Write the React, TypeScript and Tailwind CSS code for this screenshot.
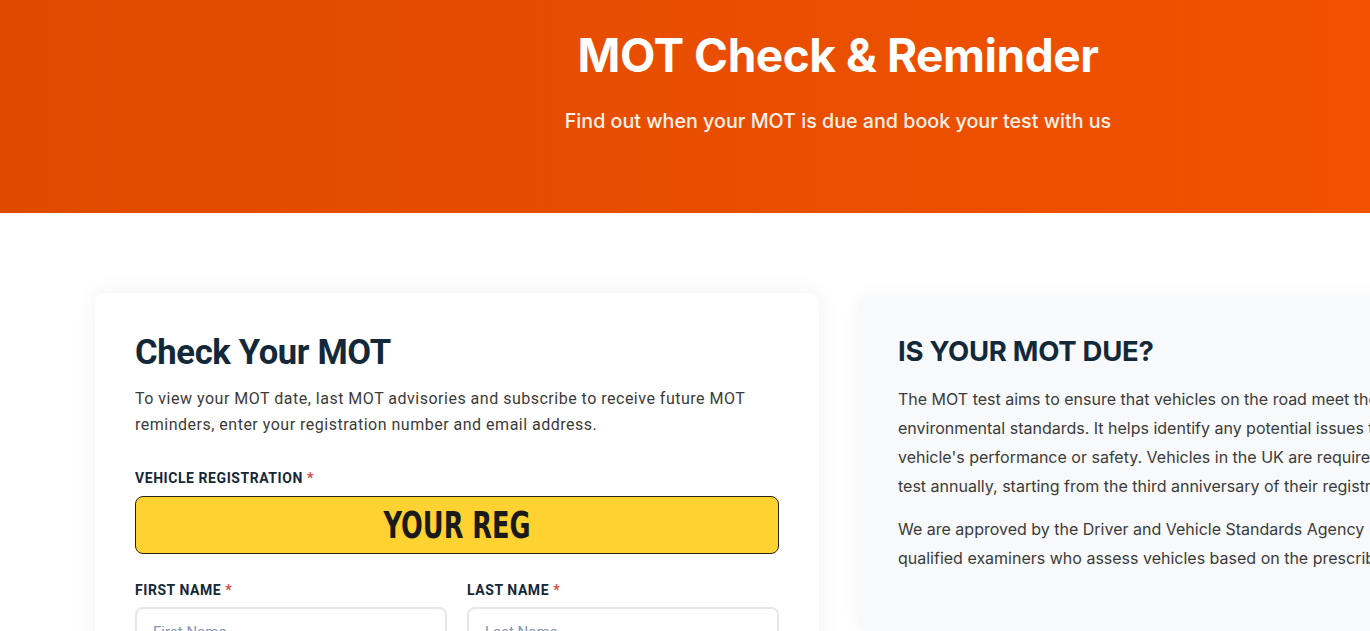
import React from 'react';

const heading = { fontFamily: 'Inter, "Noto Sans", sans-serif' };
const condensed = { fontFamily: 'Roboto, "Liberation Sans", sans-serif' };

const Label: React.FC<{ text: string; className?: string }> = ({ text, className = 'mb-[8px]' }) => (
    <label className={`block text-[14px] leading-[20px] font-bold uppercase tracking-[0.04em] text-[#13293a] ${className}`} style={condensed}>
        {text} <span className="text-[#e0453a]">*</span>
    </label>
);

const App: React.FC = () => {
    return (
        <div className="w-[1676px] bg-white" style={heading}>
            {/* Hero */}
            <section className="h-[213px] bg-linear-to-r from-[#e04a00] to-[#f55300] flex flex-col items-center pt-[25px]">
                <h1 className="text-[46px] leading-[60px] font-bold text-white tracking-[-0.01em]">MOT Check &amp; Reminder</h1>
                <p className="mt-[22px] text-[19.7px] font-medium text-[#fdf1e8]">Find out when your MOT is due and book your test with us</p>
            </section>

            <main className="px-[95px] pt-[80px] grid grid-cols-2 gap-[38px] items-start">
                {/* Left: form card */}
                <div className="bg-white rounded-[10px] shadow-[0_0_24px_rgba(0,0,0,0.06)] px-10 pt-[37px] pb-10" style={condensed}>
                    <h2 className="text-[34.6px] leading-[44px] font-bold text-[#13293a] tracking-[-0.01em]">Check Your MOT</h2>
                    <p className="mt-[12px] text-[16px] leading-[26px] tracking-[0.5px] text-[#3b3b3b]">
                        To view your MOT date, last MOT advisories and subscribe to receive future MOT reminders, enter your registration number and email address.
                    </p>

                    <div className="mt-[30px]">
                        <Label text="Vehicle Registration" />
                        <div className="w-full h-[58px] bg-[#fed230] border border-[#2a2410] rounded-[8px] flex items-center justify-center">
                            <span
                                className="text-[38px] font-bold uppercase text-[#1a1a1a] scale-x-[0.75] inline-block"
                                style={{ fontFamily: '"DejaVu Sans Condensed", "DejaVu Sans", sans-serif' }}
                            >
                                YOUR REG
                            </span>
                        </div>
                    </div>

                    <div className="mt-[26px] grid grid-cols-2 gap-5">
                        <div>
                            <Label text="First Name" className="mb-[7px]" />
                            <input placeholder="First Name" className="w-full h-[50px] border-2 border-[#e4e7ec] rounded-[8px] px-4 text-[15px] placeholder:text-[#8a97b3] outline-none" />
                        </div>
                        <div>
                            <Label text="Last Name" className="mb-[7px]" />
                            <input placeholder="Last Name" className="w-full h-[50px] border-2 border-[#e4e7ec] rounded-[8px] px-4 text-[15px] placeholder:text-[#8a97b3] outline-none" />
                        </div>
                    </div>
                </div>

                {/* Right: info card */}
                <div className="mt-[2px] bg-[#f7f9fa] rounded-[12px] shadow-[0_0_20px_rgba(0,0,0,0.04)] pl-[41px] pr-10 pt-[38px] pb-[58px]">
                    <h2 className="text-[27.5px] leading-[36px] font-bold text-[#13293a] tracking-[-0.01em]">IS YOUR MOT DUE?</h2>
                    <p className="mt-[16px] text-[16px] leading-[29px] text-[#3b3b3b]">
                        The MOT test aims to ensure that vehicles on the road meet the required safety and environmental standards. It helps identify any potential issues that could affect the vehicle's performance or safety. Vehicles in the UK are required to undergo an MOT test annually, starting from the third anniversary of their registration.
                    </p>
                    <p className="mt-[14px] text-[16px] leading-[29px] text-[#3b3b3b]">
                        We are approved by the Driver and Vehicle Standards Agency (DVSA) and employ qualified examiners who assess vehicles based on the prescribed standards.
                    </p>
                </div>
            </main>
        </div>
    );
};

export default App;
